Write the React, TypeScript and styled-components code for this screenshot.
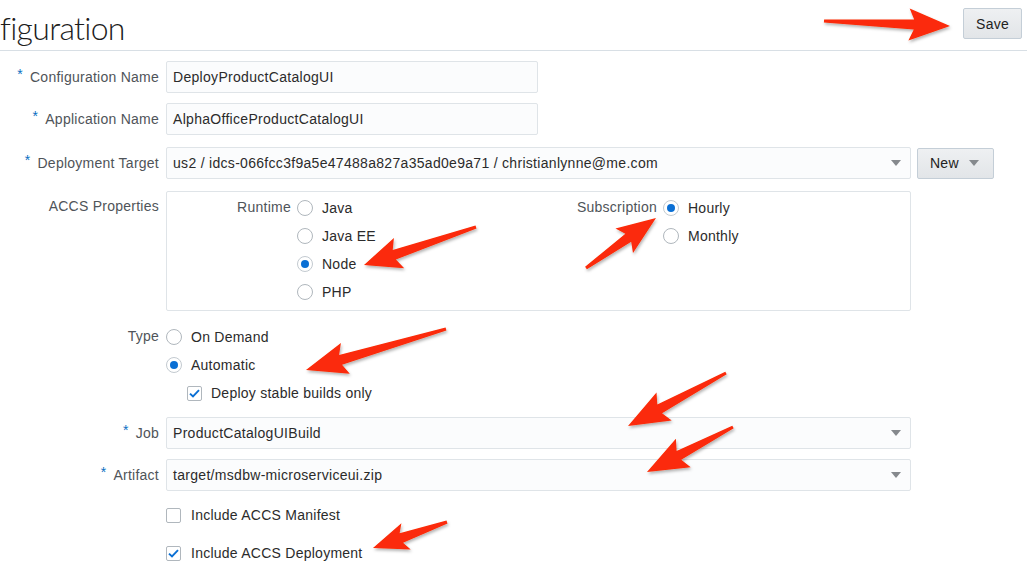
import React from "react";
import styled, { createGlobalStyle } from "styled-components";

const Global = createGlobalStyle`
  html, body { margin: 0; padding: 0; background: #ffffff; }
  body {
    font-family: "Liberation Sans", Arial, sans-serif;
    font-size: 14px;
    letter-spacing: 0.25px;
    color: #333333;
    overflow: hidden;
  }
  * { box-sizing: border-box; }
`;

const Page = styled.div`
  position: relative;
  width: 1027px;
  height: 566px;
  overflow: hidden;
  background: #fff;
`;

const Header = styled.header`
  height: 51px;
  border-bottom: 1px solid #d8dfe5;
  display: flex;
  align-items: flex-start;
  justify-content: space-between;
  padding: 8px 5px 0 0;
`;

const Title = styled.h1`
  margin: 0;
  margin-top: 2px;
  font-family: Lato, "Liberation Sans", sans-serif;
  font-weight: 300;
  font-size: 32px;
  line-height: 36px;
  color: #1c1c1c;
  letter-spacing: -0.7px;
`;

const Button = styled.button<{ $pr?: number }>`
  height: 31px;
  display: flex;
  align-items: center;
  gap: 10px;
  padding: 0 ${(p) => p.$pr ?? 12}px 0 12px;
  border: 1px solid #c4ced7;
  border-radius: 2px;
  background: linear-gradient(#eef0f2, #e2e5e8);
  font-family: "Liberation Sans", Arial, sans-serif;
  font-size: 14px;
  letter-spacing: 0.25px;
  color: #222;
  cursor: pointer;
`;

const Form = styled.div`
  padding-top: 10px;
`;

const Row = styled.div<{ $mb?: number; $top?: boolean }>`
  display: grid;
  grid-template-columns: 159px 1fr;
  column-gap: 7px;
  align-items: ${(p) => (p.$top ? "start" : "center")};
  margin-bottom: ${(p) => p.$mb ?? 10}px;
`;

const Label = styled.div<{ $pt?: number }>`
  text-align: right;
  white-space: nowrap;
  color: #4f5459;
  padding-top: ${(p) => p.$pt ?? 0}px;
`;

const Req = styled.span`
  color: #0a6fc2;
  margin-right: 7px;
  position: relative;
  top: -3px;
`;

const Input = styled.div`
  width: 372px;
  height: 32px;
  display: flex;
  align-items: center;
  padding: 0 6px;
  border: 1px solid #dfe4e8;
  border-radius: 2px;
  background: #fbfcfd;
  color: #2b2b2b;
  letter-spacing: 0.3px;
`;

const SelectWrap = styled.div`
  display: flex;
  align-items: center;
  gap: 6px;
`;

const Select = styled.div`
  width: 745px;
  height: 32px;
  display: flex;
  align-items: center;
  justify-content: space-between;
  padding: 0 9px 0 6px;
  border: 1px solid #dfe4e8;
  border-radius: 2px;
  background: #fbfcfd;
  color: #2b2b2b;
  letter-spacing: 0.3px;
`;

const Caret = styled.span`
  width: 0;
  height: 0;
  border-left: 5px solid transparent;
  border-right: 5px solid transparent;
  border-top: 6px solid #85898d;
`;

const Box = styled.div`
  width: 745px;
  height: 120px;
  border: 1px solid #dfe4e8;
  border-radius: 2px;
  display: grid;
  grid-template-columns: 372px 1fr;
  padding-top: 2px;
`;

const Group = styled.div<{ $lw: number }>`
  display: grid;
  grid-template-columns: ${(p) => p.$lw}px 1fr;
  column-gap: 6px;
  align-items: start;
`;

const GroupLabel = styled.div`
  text-align: right;
  line-height: 28px;
  color: #4f5459;
  white-space: nowrap;
  margin-top: -1px;
`;

const Options = styled.div`
  display: flex;
  flex-direction: column;
`;

const Option = styled.div<{ $indent?: number; $gap?: number }>`
  display: flex;
  align-items: center;
  height: 28px;
  gap: ${(p) => p.$gap ?? 9}px;
  margin-left: ${(p) => p.$indent ?? 0}px;
  color: #2b2b2b;
  white-space: nowrap;
`;

const RadioCircle = styled.span<{ $on?: boolean }>`
  width: 16px;
  height: 16px;
  border-radius: 50%;
  border: 1px solid ${(p) => (p.$on ? "#c3cad0" : "#b0b7bd")};
  background: #fff;
  display: flex;
  align-items: center;
  justify-content: center;
  flex: none;
  &::after {
    content: "";
    display: ${(p) => (p.$on ? "block" : "none")};
    width: 8px;
    height: 8px;
    border-radius: 50%;
    background: #0a6fd4;
  }
`;

const CheckBox = styled.span`
  width: 15px;
  height: 15px;
  border: 1px solid #b0b7bd;
  border-radius: 2px;
  background: #fff;
  display: flex;
  align-items: center;
  justify-content: center;
  flex: none;
`;

const Overlay = styled.svg`
  position: absolute;
  left: 0;
  top: 0;
  pointer-events: none;
`;

const Radio = ({ on, children }: { on?: boolean; children: React.ReactNode }) => (
  <Option>
    <RadioCircle $on={on} />
    <span>{children}</span>
  </Option>
);

const Check = ({
  on,
  indent,
  gap,
  children,
}: {
  on?: boolean;
  indent?: number;
  gap?: number;
  children: React.ReactNode;
}) => (
  <Option $indent={indent} $gap={gap}>
    <CheckBox>
      {on && (
        <svg width="11" height="9" viewBox="0 0 11 9">
          <path d="M1 4.6 L4 7.5 L10 1.2" fill="none" stroke="#0a6fd4" strokeWidth="1.9" />
        </svg>
      )}
    </CheckBox>
    <span>{children}</span>
  </Option>
);

type P = [number, number];
function arrowPoints(tail: P, tip: P, headLen: number, headHalf: number, wTail: number, wHead: number, sweep = 5) {
  const dx = tip[0] - tail[0];
  const dy = tip[1] - tail[1];
  const len = Math.hypot(dx, dy);
  const ux = dx / len;
  const uy = dy / len;
  const nx = -uy;
  const ny = ux;
  const bx = tip[0] - ux * headLen;
  const by = tip[1] - uy * headLen;
  const pts: P[] = [
    [tail[0] + (nx * wTail) / 2, tail[1] + (ny * wTail) / 2],
    [bx + (nx * wHead) / 2, by + (ny * wHead) / 2],
    [bx - ux * sweep + nx * headHalf, by - uy * sweep + ny * headHalf],
    tip,
    [bx - ux * sweep - nx * headHalf, by - uy * sweep - ny * headHalf],
    [bx - (nx * wHead) / 2, by - (ny * wHead) / 2],
    [tail[0] - (nx * wTail) / 2, tail[1] - (ny * wTail) / 2],
  ];
  return pts.map((p) => `${p[0].toFixed(1)},${p[1].toFixed(1)}`).join(" ");
}

const arrows: { tail: P; tip: P; hl: number; hh: number }[] = [
  { tail: [824, 21], tip: [950, 26], hl: 36, hh: 16 },
  { tail: [476, 227], tip: [364, 265], hl: 32, hh: 16 },
  { tail: [586, 268], tip: [656, 218], hl: 34, hh: 15 },
  { tail: [446, 329], tip: [306, 370], hl: 36, hh: 16 },
  { tail: [726, 373], tip: [628, 426], hl: 36, hh: 16 },
  { tail: [733, 427], tip: [647, 472], hl: 36, hh: 16 },
  { tail: [447, 522], tip: [373, 548], hl: 30, hh: 14 },
];

export default function App() {
  return (
    <Page>
      <Global />
      <Header>
        <Title>figuration</Title>
        <Button>Save</Button>
      </Header>
      <Form>
        <Row $mb={10}>
          <Label>
            <Req>*</Req>Configuration Name
          </Label>
          <Input>DeployProductCatalogUI</Input>
        </Row>
        <Row $mb={12}>
          <Label>
            <Req>*</Req>Application Name
          </Label>
          <Input>AlphaOfficeProductCatalogUI</Input>
        </Row>
        <Row $mb={12}>
          <Label>
            <Req>*</Req>Deployment Target
          </Label>
          <SelectWrap>
            <Select>
              <span>us2 / idcs-066fcc3f9a5e47488a827a35ad0e9a71 / christianlynne@me.com</span>
              <Caret />
            </Select>
            <Button $pr={14}>
              New <Caret />
            </Button>
          </SelectWrap>
        </Row>
        <Row $mb={12} $top>
          <Label $pt={7}>ACCS Properties</Label>
          <Box>
            <Group $lw={124}>
              <GroupLabel>Runtime</GroupLabel>
              <Options>
                <Radio>Java</Radio>
                <Radio>Java EE</Radio>
                <Radio on>Node</Radio>
                <Radio>PHP</Radio>
              </Options>
            </Group>
            <Group $lw={118}>
              <GroupLabel>Subscription</GroupLabel>
              <Options>
                <Radio on>Hourly</Radio>
                <Radio>Monthly</Radio>
              </Options>
            </Group>
          </Box>
        </Row>
        <Row $mb={10} $top>
          <Label $pt={5}>Type</Label>
          <Options>
            <Radio>On Demand</Radio>
            <Radio on>Automatic</Radio>
            <Check on indent={21}>
              Deploy stable builds only
            </Check>
          </Options>
        </Row>
        <Row $mb={10}>
          <Label>
            <Req>*</Req>Job
          </Label>
          <Select>
            <span>ProductCatalogUIBuild</span>
            <Caret />
          </Select>
        </Row>
        <Row $mb={10}>
          <Label>
            <Req>*</Req>Artifact
          </Label>
          <Select>
            <span>target/msdbw-microserviceui.zip</span>
            <Caret />
          </Select>
        </Row>
        <Row $mb={10}>
          <span />
          <Check gap={10}>Include ACCS Manifest</Check>
        </Row>
        <Row $mb={0}>
          <span />
          <Check on gap={10}>
            Include ACCS Deployment
          </Check>
        </Row>
      </Form>
      <Overlay width="1027" height="566" viewBox="0 0 1027 566">
        <defs>
          <filter id="shadow" x="-20%" y="-20%" width="140%" height="140%">
            <feDropShadow dx="1" dy="2" stdDeviation="1.4" floodColor="#000" floodOpacity="0.3" />
          </filter>
        </defs>
        {arrows.map((a, i) => (
          <polygon
            key={i}
            points={arrowPoints(a.tail, a.tip, a.hl, a.hh, 3, 10)}
            fill="#fb2a07"
            filter="url(#shadow)"
            strokeLinejoin="round"
          />
        ))}
      </Overlay>
    </Page>
  );
}
